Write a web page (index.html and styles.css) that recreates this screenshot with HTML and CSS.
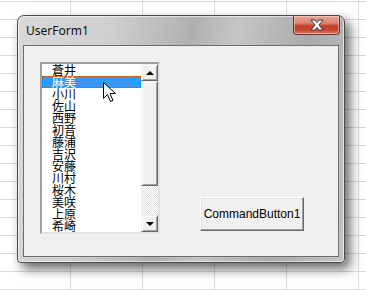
FILE: index.html
```html
<!DOCTYPE html>
<html lang="ja">
<head>
    <meta charset="UTF-8">
    <meta name="viewport" content="width=device-width, initial-scale=1.0">
    <title>UserForm1</title>
    <link rel="stylesheet" href="styles.css">
</head>
<body>

    <div class="sheet">
        <div class="window">
            <div class="title-bar">
                <span class="title">UserForm1</span>
                <button class="close-button">
                    <svg width="18" height="12" viewBox="0 0 18 12">
                        <path d="M3 1 H7 L9 3.5 L11 1 H15 L11 6 L15 11 H11 L9 8.5 L7 11 H3 L7 6 Z" fill="#fff" stroke="#3a3a4a" stroke-width="1" stroke-linejoin="round"/>
                    </svg>
                </button>
            </div>

            <div class="client">
                <div class="list-box">
                    <ul class="items">
                        <li>蒼井</li>
                        <li class="selected">麻美</li>
                        <li>小川</li>
                        <li>佐山</li>
                        <li>西野</li>
                        <li>初音</li>
                        <li>藤浦</li>
                        <li>吉沢</li>
                        <li>安藤</li>
                        <li>川村</li>
                        <li>桜木</li>
                        <li>美咲</li>
                        <li>上原</li>
                        <li>希崎</li>
                    </ul>
                    <div class="scroll-bar">
                        <div class="scroll-btn"><span class="arrow-up"></span></div>
                        <div class="scroll-thumb"></div>
                        <div class="scroll-track"></div>
                        <div class="scroll-btn"><span class="arrow-down"></span></div>
                    </div>

                    <!-- マウスカーソル -->
                    <svg class="cursor" width="13" height="21" viewBox="0 0 13 21">
                        <path d="M0.5 0.5 V16.5 L4.5 12.5 L7.5 19.5 L10 18.5 L7 11.5 H12.5 Z" fill="#fff" stroke="#000" stroke-width="1" stroke-linejoin="miter"/>
                    </svg>
                </div>

                <button class="command-button">CommandButton1</button>
            </div>
        </div>
    </div>

</body>
</html>
```

FILE: styles.css
```css
body {
    margin: 0;
    font-family: "Liberation Sans", Arial, sans-serif;
}
.sheet {
    width: 366px;
    height: 290px;
    overflow: hidden;
    background-color: #fff;
    background-image:
        repeating-linear-gradient(to right, transparent 0, transparent 70px, #d9dbdd 70px, #d9dbdd 71px, transparent 71px, transparent 72px),
        repeating-linear-gradient(to bottom, transparent 0, transparent 1px, #d9dbdd 1px, #d9dbdd 2px, transparent 2px, transparent 18px);
    padding-top: 15px;
    box-sizing: border-box;
}
.window {
    margin-left: 17px;
    width: 328px;
    height: 248px;
    box-sizing: border-box;
    display: flex;
    flex-direction: column;
    padding: 0 5px 5px 5px;
    border: 1px solid #4a4a4a;
    border-radius: 7px 7px 4px 4px;
    background: linear-gradient(100deg, #d8d8d8 0%, #d0d0d0 25%, #b0b0b0 48%, #c6c6c6 60%, #aaaaaa 80%, #c4c4c4 100%);
    box-shadow: 5px 6px 12px rgba(0, 0, 0, 0.6), inset 0 0 0 1px rgba(255, 255, 255, 0.6);
}
.title-bar {
    height: 29px;
    display: flex;
    align-items: flex-start;
    justify-content: space-between;
}
.title {
    margin-top: 6px;
    margin-left: 3px;
    font-family: "Noto Sans", sans-serif;
    font-size: 12px;
    color: #111;
}
.close-button {
    width: 47px;
    height: 19px;
    margin-right: -1px;
    padding: 0;
    display: flex;
    align-items: center;
    justify-content: center;
    border: 1px solid #6d3a32;
    border-top: none;
    border-radius: 0 0 4px 4px;
    background: linear-gradient(to bottom, #e6a89a 0%, #d8826f 40%, #c0402a 55%, #c84a34 80%, #e07a60 100%);
    box-shadow: inset 0 0 0 1px rgba(255, 220, 210, 0.5);
}
.client {
    flex: 1;
    display: flex;
    align-items: flex-start;
    background-color: #f0f0f0;
    border: 1px solid #6e6e6e;
    padding: 16px 0 0 16px;
}
.list-box {
    position: relative;
    display: flex;
    width: 120px;
    height: 172px;
    box-sizing: border-box;
    border: 2px solid;
    border-color: #a0a0a0 #e3e3e3 #e3e3e3 #a0a0a0;
    background-color: #fff;
}
.items {
    list-style: none;
    margin: 0;
    padding: 0;
    flex: 1;
    font-family: "Noto Sans CJK JP", sans-serif;
    font-size: 12px;
    color: #000;
}
.items li {
    height: 12px;
    padding-left: 9px;
    border: 1px dotted transparent;
    box-sizing: border-box;
    line-height: 10px;
}
.items li.selected {
    background-color: #3399ff;
    color: #fff;
    border-color: #c45000;
}
.scroll-bar {
    width: 17px;
    display: flex;
    flex-direction: column;
}
.scroll-btn,
.scroll-thumb {
    box-sizing: border-box;
    background-color: #f0f0f0;
    border: 1px solid;
    border-color: #f0f0f0 #696969 #696969 #f0f0f0;
    box-shadow: inset 1px 1px 0 #fff, inset -1px -1px 0 #a0a0a0;
}
.scroll-btn {
    height: 17px;
    display: flex;
    align-items: center;
    justify-content: center;
}
.scroll-thumb {
    height: 105px;
}
.scroll-track {
    flex: 1;
    background-color: #f4f4f4;
    background-image: repeating-conic-gradient(#e4e4e4 0 25%, #fafafa 0 50%);
    background-size: 2px 2px;
}
.arrow-up {
    width: 0;
    height: 0;
    border-left: 4px solid transparent;
    border-right: 4px solid transparent;
    border-bottom: 4px solid #000;
}
.arrow-down {
    width: 0;
    height: 0;
    border-left: 4px solid transparent;
    border-right: 4px solid transparent;
    border-top: 4px solid #000;
}
.cursor {
    position: absolute;
    left: 61px;
    top: 18px;
}
.command-button {
    margin-top: 135px;
    margin-left: 40px;
    width: 104px;
    height: 34px;
    padding: 0;
    font-family: "Liberation Sans", Arial, sans-serif;
    font-size: 12px;
    color: #000;
    background-color: #f0f0f0;
    border: 1px solid;
    border-color: #fff #696969 #696969 #fff;
    box-shadow: inset -1px -1px 0 #a0a0a0, inset 1px 1px 0 #e3e3e3;
}
```
